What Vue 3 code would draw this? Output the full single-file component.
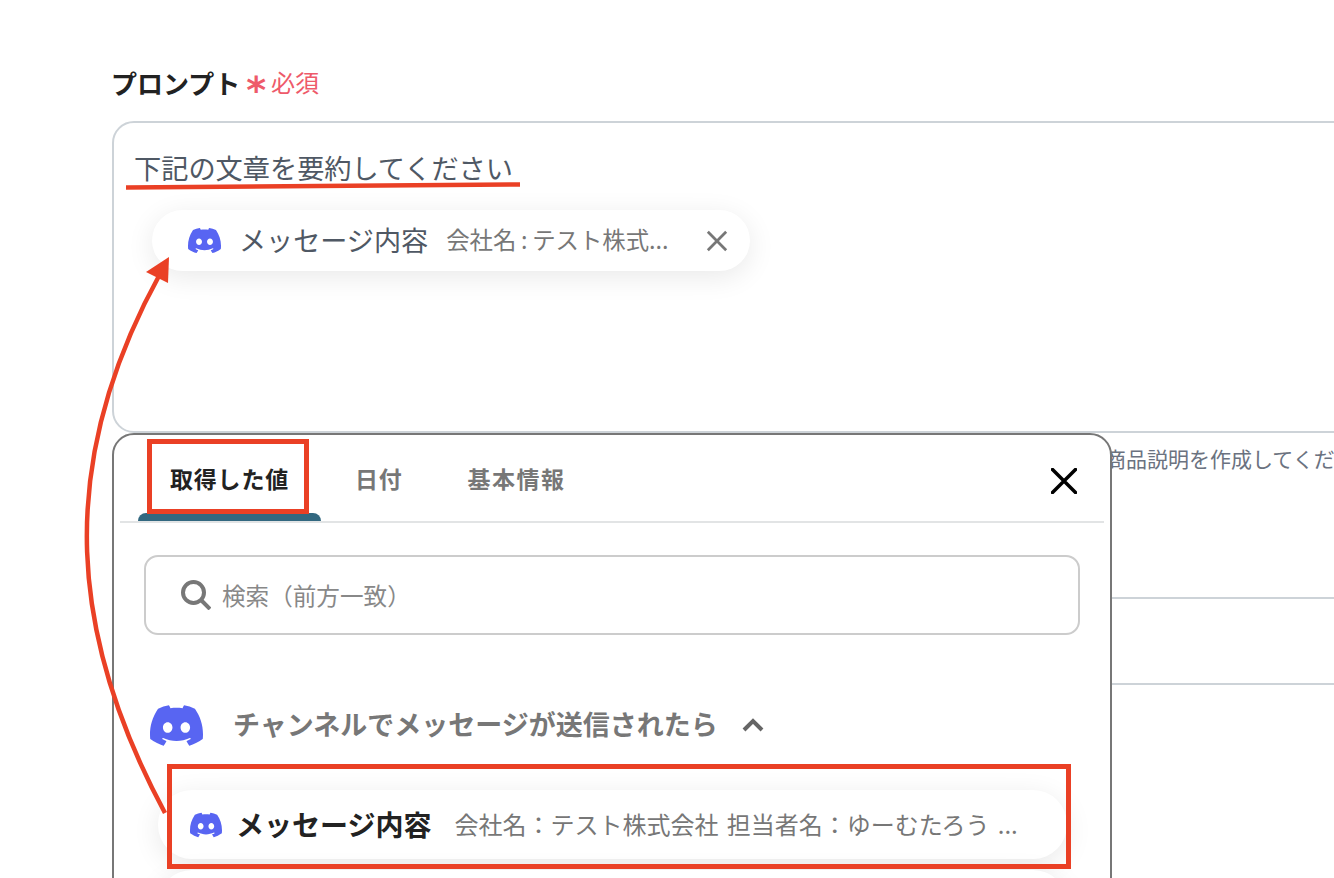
<script setup>
const discordPath = 'M20.317 4.3698a19.7913 19.7913 0 00-4.8851-1.5152.0741.0741 0 00-.0785.0371c-.211.3753-.4447.8648-.6083 1.2495-1.8447-.2762-3.68-.2762-5.4868 0-.1636-.3933-.4058-.8742-.6177-1.2495a.077.077 0 00-.0785-.037 19.7363 19.7363 0 00-4.8852 1.515.0699.0699 0 00-.0321.0277C.5334 9.0458-.319 13.5799.0992 18.0578a.0824.0824 0 00.0312.0561c2.0528 1.5076 4.0413 2.4228 5.9929 3.0294a.0777.0777 0 00.0842-.0276c.4616-.6304.8731-1.2952 1.226-1.9942a.076.076 0 00-.0416-.1057c-.6528-.2476-1.2743-.5495-1.8722-.8923a.077.077 0 01-.0076-.1277c.1258-.0943.2517-.1923.3718-.2914a.0743.0743 0 01.0776-.0105c3.9278 1.7933 8.18 1.7933 12.0614 0a.0739.0739 0 01.0785.0095c.1202.099.246.1981.3728.2924a.077.077 0 01-.0066.1276 12.2986 12.2986 0 01-1.873.8914.0766.0766 0 00-.0407.1067c.3604.698.7719 1.3628 1.225 1.9932a.076.076 0 00.0842.0286c1.961-.6067 3.9495-1.5219 6.0023-3.0294a.077.077 0 00.0313-.0552c.5004-5.177-.8382-9.6739-3.5485-13.6604a.061.061 0 00-.0312-.0286zM8.02 15.3312c-1.1825 0-2.1569-1.0857-2.1569-2.419 0-1.3332.9555-2.4189 2.157-2.4189 1.2108 0 2.1757 1.0952 2.1568 2.419 0 1.3332-.9555 2.4189-2.1569 2.4189zm7.9748 0c-1.1825 0-2.1569-1.0857-2.1569-2.419 0-1.3332.9554-2.4189 2.1569-2.4189 1.2108 0 2.1757 1.0952 2.1568 2.419 0 1.3332-.946 2.4189-2.1568 2.4189Z'

const tabs = [
  { id: 'values', label: '取得した値', active: true },
  { id: 'date', label: '日付', active: false },
  { id: 'basic', label: '基本情報', active: false },
]
</script>

<template>
  <div class="page">
    <div class="form">
      <div class="field-label">
        <span class="label-text">プロンプト</span>
        <span class="required-mark">*</span>
        <span class="required-text">必須</span>
      </div>

      <div class="prompt-box">
        <p class="prompt-text">下記の文章を要約してください</p>
        <div class="value-chip">
          <svg class="chip-logo" viewBox="0 0 24 24"><path :d="discordPath" /></svg>
          <span class="chip-name">メッセージ内容</span>
          <span class="chip-value">会社名&#8201;:&#8201;テスト株式...</span>
          <svg class="chip-close" viewBox="0 0 24 24"><path d="M2 2 22 22M22 2 2 22" /></svg>
        </div>
      </div>

      <p class="hint">商品説明を作成してください</p>
      <div class="next-field"></div>
    </div>

    <section class="picker">
      <div class="tab-bar">
        <button
          v-for="tab in tabs"
          :key="tab.id"
          class="tab"
          :class="[tab.id, { active: tab.active }]"
          type="button"
        >
          {{ tab.label }}
        </button>
        <svg class="picker-close" viewBox="0 0 26 26"><path d="M1.5 1.5 24.5 24.5M24.5 1.5 1.5 24.5" /></svg>
      </div>

      <div class="search-box">
        <svg class="search-icon" viewBox="0 0 30 30">
          <circle cx="12.5" cy="12.5" r="10.5" />
          <path d="M20.5 20.5 29 29" />
        </svg>
        <span class="search-placeholder">検索（前方一致）</span>
      </div>

      <div class="group-head">
        <svg class="group-logo" viewBox="0 0 24 24"><path :d="discordPath" /></svg>
        <span class="group-title">チャンネルでメッセージが送信されたら</span>
        <svg class="group-chevron" viewBox="0 0 22 14"><path d="M2 12 11 3 20 12" /></svg>
      </div>

      <div class="item-list">
        <div class="item-chip">
          <svg class="item-logo" viewBox="0 0 24 24"><path :d="discordPath" /></svg>
          <span class="item-name">メッセージ内容</span>
          <span class="item-value">会社名：テスト株式会社 担当者名：ゆーむたろう ...</span>
        </div>
        <div class="item-chip"></div>
      </div>
    </section>

    <!-- annotations drawn over the screenshot -->
    <div class="mark mark-tab"></div>
    <div class="mark mark-item"></div>
    <svg class="arrow-layer" viewBox="0 0 1334 878">
      <path class="arrow-line" d="M126 187.5 520 184.5" />
      <path class="arrow-line" d="M165 813C72 640 52 470 160 274" />
      <path class="arrow-head" d="M169 257 146 272 168 283Z" />
    </svg>
  </div>
</template>

<style>
html,
body {
  margin: 0;
  background: #fff;
}
</style>

<style scoped>
.page {
  position: relative;
  width: 1334px;
  height: 878px;
  overflow: hidden;
  background: #fff;
  font-family: "Noto Sans CJK JP", "Noto Sans", sans-serif;
}

.form {
  width: 1500px;
  padding: 64px 0 0 111px;
}

.field-label {
  display: flex;
  align-items: center;
  height: 36px;
}

.label-text {
  color: #222;
  font-size: 26px;
  font-weight: 700;
}

.required-mark {
  margin-left: 6px;
  color: #ee5a6a;
  font-family: "DejaVu Sans", sans-serif;
  font-size: 38px;
  font-weight: 700;
  line-height: 36px;
  transform: translateY(8px);
}

.required-text {
  margin-left: 5px;
  color: #ee5a6a;
  font-size: 24px;
  line-height: 36px;
}

.prompt-box {
  box-sizing: border-box;
  height: 312px;
  margin: 21px 0 0 1px;
  padding: 25px 0 0 20px;
  border: 2px solid #cdd3d8;
  border-radius: 22px;
}

.prompt-text {
  margin: 0;
  color: #4f5864;
  font-size: 27.2px;
  line-height: 38px;
}

.value-chip {
  display: flex;
  align-items: center;
  box-sizing: border-box;
  width: 598px;
  height: 61px;
  margin: 24px 0 0 18px;
  padding: 0 20px 0 36px;
  border-radius: 31px;
  background: #fff;
  box-shadow: 0 6px 28px rgba(0, 0, 0, 0.09);
}

.chip-logo {
  width: 33px;
  height: 33px;
  flex: none;
  fill: #5865f2;
}

.chip-name {
  margin-left: 18px;
  padding-bottom: 3px;
  color: #4f5864;
  font-size: 27.1px;
  white-space: nowrap;
}

.chip-value {
  margin-left: 18px;
  padding-bottom: 3px;
  color: #777;
  font-size: 23.4px;
  white-space: nowrap;
}

.chip-close {
  width: 22px;
  height: 22px;
  margin-left: auto;
  margin-right: 2px;
  fill: none;
  stroke: #777;
  stroke-width: 3;
}

.hint {
  margin: 10px 0 0 994px;
  color: #6b7280;
  font-size: 21px;
  line-height: 30px;
  white-space: nowrap;
}

.next-field {
  box-sizing: border-box;
  height: 88px;
  margin: 124px 0 0 1px;
  border-top: 2px solid #cdd3d8;
  border-bottom: 2px solid #cdd3d8;
}

.picker {
  position: absolute;
  top: 433px;
  left: 112px;
  box-sizing: border-box;
  width: 1000px;
  height: 520px;
  padding: 0 6px;
  border: 2px solid #777;
  border-radius: 22px;
  background: #fff;
}

.tab-bar {
  display: flex;
  align-items: center;
  position: relative;
  height: 86px;
  border-bottom: 2px solid #e2e4e5;
}

.tab {
  position: relative;
  height: 86px;
  padding: 0;
  border: 0;
  background: transparent;
  color: #777;
  font-family: inherit;
  font-size: 23px;
  font-weight: 700;
  letter-spacing: 0.8px;
  white-space: nowrap;
}

.tab.values {
  width: 183px;
  margin-left: 18px;
  color: #222;
}

.tab.date {
  margin-left: 34px;
}

.tab.basic {
  margin-left: 65px;
  letter-spacing: 1.5px;
}

.tab.active::after {
  content: "";
  position: absolute;
  right: 0;
  bottom: 0;
  left: 0;
  height: 8px;
  border-radius: 8px 8px 0 0;
  background: #326880;
}

.picker-close {
  width: 26px;
  height: 26px;
  margin: 5px 27px 0 auto;
  fill: none;
  stroke: #000;
  stroke-width: 3.5;
  stroke-linecap: round;
}

.search-box {
  display: flex;
  align-items: center;
  box-sizing: border-box;
  width: 936px;
  height: 80px;
  margin: 32px 0 0 24px;
  padding-left: 35px;
  border: 2px solid #ccc;
  border-radius: 14px;
}

.search-icon {
  width: 30px;
  height: 30px;
  fill: none;
  stroke: #777;
  stroke-width: 4;
}

.search-placeholder {
  margin-left: 11px;
  color: #888;
  font-size: 23.6px;
}

.group-head {
  display: flex;
  align-items: center;
  height: 50px;
  margin: 65px 0 0 30px;
}

.group-logo {
  width: 53px;
  height: 53px;
  flex: none;
  fill: #5865f2;
}

.group-title {
  margin: 0 0 4px 30px;
  color: #777;
  font-size: 27px;
  font-weight: 700;
  white-space: nowrap;
}

.group-chevron {
  width: 22px;
  height: 14px;
  margin-left: 24px;
  fill: none;
  stroke: #666;
  stroke-width: 4;
}

.item-list {
  display: flex;
  flex-direction: column;
  gap: 11px;
  margin: 40px 0 0 38px;
}

.item-chip {
  display: flex;
  align-items: center;
  box-sizing: border-box;
  width: 909px;
  height: 69px;
  padding-left: 32px;
  border-radius: 34px;
  background: #fff;
  box-shadow: 0 6px 28px rgba(0, 0, 0, 0.09);
}

.item-logo {
  width: 32px;
  height: 32px;
  flex: none;
  fill: #5865f2;
}

.item-name {
  margin-left: 14px;
  padding-bottom: 2px;
  color: #222;
  font-size: 28px;
  font-weight: 700;
  white-space: nowrap;
}

.item-value {
  margin-left: 23px;
  padding-bottom: 2px;
  color: #777;
  font-size: 24px;
  word-spacing: 3px;
  white-space: nowrap;
}

.mark {
  position: absolute;
  box-sizing: border-box;
  border: 5px solid #ea4025;
  pointer-events: none;
}

.mark-tab {
  top: 439px;
  left: 147px;
  width: 162px;
  height: 75px;
}

.mark-item {
  top: 764px;
  left: 167px;
  width: 904px;
  height: 105px;
}

.arrow-layer {
  position: absolute;
  top: 0;
  left: 0;
  width: 1334px;
  height: 878px;
  pointer-events: none;
}

.arrow-line {
  fill: none;
  stroke: #ea4025;
  stroke-width: 4.5;
}

.arrow-head {
  fill: #ea4025;
}
</style>
